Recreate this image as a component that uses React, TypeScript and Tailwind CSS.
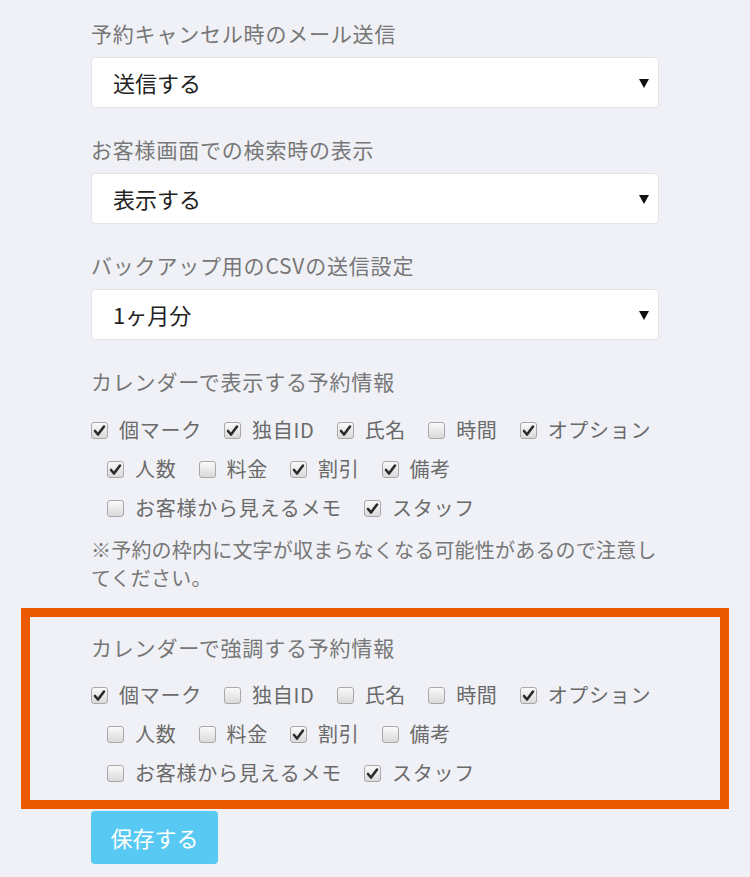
import { useState } from "react";

type Item = { key: string; label: string };

const items: Item[] = [
  { key: "mark", label: "個マーク" },
  { key: "uid", label: "独自ID" },
  { key: "name", label: "氏名" },
  { key: "time", label: "時間" },
  { key: "option", label: "オプション" },
  { key: "people", label: "人数" },
  { key: "price", label: "料金" },
  { key: "discount", label: "割引" },
  { key: "remark", label: "備考" },
  { key: "memo", label: "お客様から見えるメモ" },
  { key: "staff", label: "スタッフ" },
];

const font = { fontFamily: '"Noto Sans CJK JP", "Noto Sans", sans-serif' };

function SelectField({ label, value, options }: { label: string; value: string; options: string[] }) {
  const [v, setV] = useState(value);
  return (
    <div className="mb-[27px]">
      <div className="mb-[10px] text-[21px] leading-[28px] tracking-[0.8px] text-[#777]">{label}</div>
      <div className="relative">
        <select
          value={v}
          onChange={(e) => setV(e.target.value)}
          className="block h-[51px] w-full appearance-none rounded-[4px] border border-[#e3e4e8] bg-white pl-[21px] text-[22px] text-[#222] outline-none"
          style={font}
        >
          {options.map((o) => (
            <option key={o}>{o}</option>
          ))}
        </select>
        <svg
          className="pointer-events-none absolute right-[10px] top-[22px]"
          width="10"
          height="9"
          viewBox="0 0 10 9"
        >
          <polygon points="0,0 10,0 5,9" fill="#111" />
        </svg>
      </div>
    </div>
  );
}

function Check({ checked, label, first, onToggle }: { checked: boolean; label: string; first: boolean; onToggle: () => void }) {
  return (
    <label
      onClick={onToggle}
      className={`flex h-[28px] cursor-pointer items-center gap-[11px] mr-[6px] ${first ? "" : "ml-[16px]"}`}
    >
      <span className="flex h-[17px] w-[17px] items-center justify-center rounded-[3px] border border-[#a8a8a8] bg-gradient-to-b from-[#fafafa] to-[#dadada]">
        {checked && (
          <svg width="13" height="13" viewBox="0 0 13 13">
            <path d="M2 7 L5 10.5 L11 2.5" fill="none" stroke="#2a2a2a" strokeWidth="2.6" strokeLinecap="round" strokeLinejoin="round" />
          </svg>
        )}
      </span>
      <span className="text-[20px] leading-[28px] tracking-[0.75px] text-[#6a6a6a]">{label}</span>
    </label>
  );
}

function CheckGroup({ initial }: { initial: string[] }) {
  const [on, setOn] = useState<string[]>(initial);
  const toggle = (k: string) =>
    setOn((prev) => (prev.includes(k) ? prev.filter((x) => x !== k) : [...prev, k]));
  return (
    <div className="flex flex-wrap gap-y-[11px]">
      {items.map((it, i) => (
        <Check
          key={it.key}
          label={it.label}
          first={i === 0}
          checked={on.includes(it.key)}
          onToggle={() => toggle(it.key)}
        />
      ))}
    </div>
  );
}

export default function App() {
  return (
    <div className="min-h-screen w-full bg-[#f0f1f6] pt-[19px]" style={font}>
      <div className="ml-[91px] w-[568px]">
        <SelectField label="予約キャンセル時のメール送信" value="送信する" options={["送信する", "送信しない"]} />
        <SelectField label="お客様画面での検索時の表示" value="表示する" options={["表示する", "表示しない"]} />
        <SelectField label="バックアップ用のCSVの送信設定" value="1ヶ月分" options={["1ヶ月分", "3ヶ月分", "送信しない"]} />

        <div className="mb-[21px] text-[21px] leading-[28px] tracking-[0.8px] text-[#777]">カレンダーで表示する予約情報</div>
        <CheckGroup initial={["mark", "uid", "name", "option", "people", "discount", "remark", "staff"]} />
        <p className="mt-[14px] text-[20px] leading-[28px] tracking-[0.2px] text-[#777]">
          ※予約の枠内に文字が収まらなくなる可能性があるので注意してください。
        </p>

        <div className="-mx-[70px] mt-[16px] border-[9px] border-[#eb5a00] px-[61px] pt-[16px] pb-[13px]">
          <div className="mb-[20px] text-[21px] leading-[28px] tracking-[0.8px] text-[#777]">カレンダーで強調する予約情報</div>
          <CheckGroup initial={["mark", "option", "discount", "staff"]} />
        </div>

        <button className="mt-[2px] h-[53px] w-[127px] rounded-[4px] bg-[#58c9f2] text-[22px] text-white">
          保存する
        </button>
      </div>
    </div>
  );
}
